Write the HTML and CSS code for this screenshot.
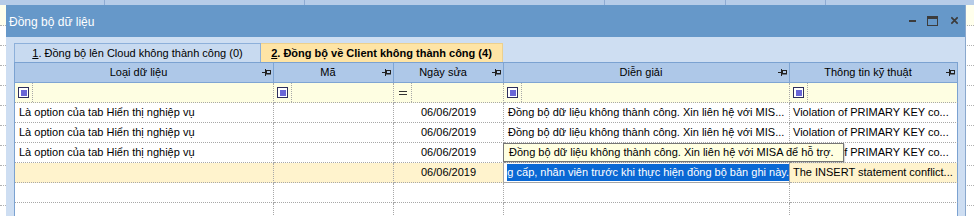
FILE: index.html
```html
<!DOCTYPE html>
<html lang="vi">
<head>
<meta charset="utf-8">
<title>Đồng bộ dữ liệu</title>
<link rel="stylesheet" href="styles.css">
</head>
<body>
<div class="desktop">
  <div class="bg">
    <div class="bg-head">
      <span class="bh w1"></span><span class="bh w2"></span><span class="bh w3"></span><span class="bh w4"></span><span class="bh w5"></span><span class="bh w6"></span>
    </div>
    <div class="bg-row first"></div>
    <div class="bg-row"></div>
    <div class="bg-row"></div>
    <div class="bg-row"></div>
    <div class="bg-row"></div>
    <div class="bg-row"></div>
    <div class="bg-row"></div>
    <div class="bg-row"></div>
    <div class="bg-row"></div>
    <div class="bg-row"></div>
    <div class="bg-row"></div>
  </div>

  <div class="window">
    <div class="titlebar">
      <span class="title">Đồng bộ dữ liệu</span>
      <div class="controls">
        <svg class="ic-min" width="7" height="11" viewBox="0 0 7 11"><rect x="0" y="4" width="7" height="2" fill="#3c3c3c"/></svg>
        <svg class="ic-max" width="11" height="11" viewBox="0 0 11 11"><rect x="0.5" y="0.5" width="10" height="9" fill="none" stroke="#3c3c3c"/><rect x="0" y="0" width="11" height="3" fill="#3c3c3c"/></svg>
        <svg class="ic-close" width="7" height="11" viewBox="0 0 7 11"><path d="M0.3 1.3 L6.7 7.7 M6.7 1.3 L0.3 7.7" stroke="#3c3c3c" stroke-width="1.9" fill="none"/></svg>
      </div>
    </div>

    <div class="panel">
      <div class="tabs">
        <div class="tab"><u>1</u>. Đồng bộ lên Cloud không thành công (0)</div>
        <div class="tab active"><u>2</u>. Đồng bộ về Client không thành công (4)</div>
      </div>

      <div class="grid">
        <div class="row hdr">
          <div class="cell"><span class="label">Loại dữ liệu</span><svg class="pin" width="10" height="7" viewBox="0 0 10 7"><path d="M0 3.5 H3.5 M3.5 0 V7" stroke="#222" fill="none"/><rect x="4.5" y="1.5" width="4" height="3" fill="none" stroke="#222"/><path d="M4 5 H9" stroke="#222"/></svg></div>
          <div class="cell"><span class="label">Mã</span><svg class="pin" width="10" height="7" viewBox="0 0 10 7"><path d="M0 3.5 H3.5 M3.5 0 V7" stroke="#222" fill="none"/><rect x="4.5" y="1.5" width="4" height="3" fill="none" stroke="#222"/><path d="M4 5 H9" stroke="#222"/></svg></div>
          <div class="cell"><span class="label">Ngày sửa</span><svg class="pin" width="10" height="7" viewBox="0 0 10 7"><path d="M0 3.5 H3.5 M3.5 0 V7" stroke="#222" fill="none"/><rect x="4.5" y="1.5" width="4" height="3" fill="none" stroke="#222"/><path d="M4 5 H9" stroke="#222"/></svg></div>
          <div class="cell"><span class="label">Diễn giải</span><svg class="pin" width="10" height="7" viewBox="0 0 10 7"><path d="M0 3.5 H3.5 M3.5 0 V7" stroke="#222" fill="none"/><rect x="4.5" y="1.5" width="4" height="3" fill="none" stroke="#222"/><path d="M4 5 H9" stroke="#222"/></svg></div>
          <div class="cell last"><span class="label">Thông tin kỹ thuật</span><svg class="pin" width="10" height="7" viewBox="0 0 10 7"><path d="M0 3.5 H3.5 M3.5 0 V7" stroke="#222" fill="none"/><rect x="4.5" y="1.5" width="4" height="3" fill="none" stroke="#222"/><path d="M4 5 H9" stroke="#222"/></svg></div>
        </div>

        <div class="row flt">
          <div class="cell"><span class="op"><span class="fbox"><span class="fdot"></span></span></span></div>
          <div class="cell"><span class="op"><span class="fbox"><span class="fdot"></span></span></span></div>
          <div class="cell"><span class="op"><span class="eq"></span></span></div>
          <div class="cell"><span class="op"><span class="fbox"><span class="fdot"></span></span></span></div>
          <div class="cell last"><span class="op"><span class="fbox"><span class="fdot"></span></span></span></div>
        </div>

        <div class="row data">
          <div class="cell">Là option của tab Hiển thị nghiệp vụ</div>
          <div class="cell"></div>
          <div class="cell date">06/06/2019</div>
          <div class="cell">Đồng bộ dữ liệu không thành công. Xin liên hệ với MIS...</div>
          <div class="cell last">Violation of PRIMARY KEY co...</div>
        </div>
        <div class="row data">
          <div class="cell">Là option của tab Hiển thị nghiệp vụ</div>
          <div class="cell"></div>
          <div class="cell date">06/06/2019</div>
          <div class="cell">Đồng bộ dữ liệu không thành công. Xin liên hệ với MIS...</div>
          <div class="cell last">Violation of PRIMARY KEY co...</div>
        </div>
        <div class="row data">
          <div class="cell">Là option của tab Hiển thị nghiệp vụ</div>
          <div class="cell"></div>
          <div class="cell date">06/06/2019</div>
          <div class="cell">Đồng bộ dữ liệu không thành công. Xin liên hệ với MIS...</div>
          <div class="cell last">Violation of PRIMARY KEY co...</div>
        </div>
        <div class="row data focused">
          <div class="cell"></div>
          <div class="cell"></div>
          <div class="cell date">06/06/2019</div>
          <div class="cell edit"><div class="sel"><span>Vui lòng nâng cấp, nhân viên trước khi thực hiện đồng bộ bản ghi này.</span></div></div>
          <div class="cell last">The INSERT statement conflict...</div>
        </div>
        <div class="row data">
          <div class="cell"></div><div class="cell"></div><div class="cell"></div><div class="cell"></div><div class="cell last"></div>
        </div>
        <div class="row data">
          <div class="cell"></div><div class="cell"></div><div class="cell"></div><div class="cell"></div><div class="cell last"></div>
        </div>

        <div class="tooltip">Đồng bộ dữ liệu không thành công. Xin liên hệ với MISA để hỗ trợ.</div>
      </div>
    </div>
  </div>
</div>
</body>
</html>
```
FILE: styles.css
```css
* { box-sizing: border-box; margin: 0; padding: 0; }
html, body { width: 974px; height: 216px; overflow: hidden; background: #ffffff; }
body { font-family: "Liberation Sans", Arial, sans-serif; font-size: 11px; color: #000; }

.desktop { position: relative; width: 974px; height: 216px; overflow: hidden; }

/* background grid behind the dialog */
.bg-head { height: 5px; display: flex; background: #b6cce8; }
.bh { height: 5px; border-right: 1px solid #8eabd2; }
.w1 { width: 105px; } .w2 { width: 200px; } .w3 { width: 300px; }
.w4 { width: 121px; } .w5 { width: 100px; } .w6 { flex: 1; border-right: none; }
.bg-row { height: 20px; border-bottom: 1px dotted #b0b0b0; }
.bg-row.first { height: 21px; background: #ffffec; }

/* dialog window */
.window {
  position: absolute; left: 6px; top: 5px;
  width: 960px; height: 212px;
  background: #cedef2;
  border-right: 1px solid #8aa8cd;
}
.titlebar {
  height: 32px; background: #6698c9; color: #fff;
  display: flex; align-items: flex-start; padding-left: 3px;
}
.title { font-size: 12px; line-height: 32px; padding-top: 1px; }
.controls { margin-left: auto; display: flex; align-items: flex-start; padding-top: 11px; padding-right: 7px; }
.ic-min { margin-right: 11px; }
.ic-max { margin-right: 13px; }

.panel { padding: 6px 7px 0 8px; }

.tabs { display: flex; height: 19px; }
.tab {
  height: 19px; line-height: 18px; text-align: center;
  border: 1px solid #8db0da; border-bottom: none;
  background: #c8daf0;
}
.tab:first-child { width: 247px; }
.tab.active { width: 242px; background: #fee4a5; border-color: #ecd08e; border-left: none; font-weight: bold; }

.grid {
  position: relative; width: 944px;
  border-left: 1px solid #7ba2d1; border-top: 1px solid #7ba2d1;
  background: #fff;
}
.row { display: grid; grid-template-columns: 259px 120px 110px 286px 168px; height: 20px; }
.cell { height: 20px; white-space: nowrap; overflow: hidden; }

.hdr .cell {
  background: #aec8e8; border-right: 1px solid #7fa5d3; border-bottom: 1px solid #7fa5d3;
  display: flex; align-items: center;
}
.hdr .label { flex: 1; text-align: center; line-height: 19px; }
.pin { margin-right: 1px; flex: none; }

.flt .cell {
  background: #fefee2; border-right: 1px dotted #a8a8a8; border-bottom: 1px dotted #a8a8a8;
  display: flex; align-items: center;
}
.op {
  width: 18px; height: 19px; border-right: 1px dotted #a8a8a8;
  display: flex; align-items: center; justify-content: center;
}
.fbox {
  width: 11px; height: 11px; border: 1px solid #2e2e5c; background: #fff;
  display: flex; align-items: center; justify-content: center;
}
.fdot { width: 6px; height: 6px; background: #6a66d6; }
.eq { width: 8px; height: 4px; border-top: 1px solid #333; border-bottom: 1px solid #333; margin-top: 1px; }

.data .cell {
  border-right: 1px dotted #a8a8a8; border-bottom: 1px dotted #a8a8a8;
  padding: 0 4px; line-height: 19px;
}
.data .cell.last { padding-left: 3px; }
.cell.last, .hdr .cell.last, .flt .cell.last { border-right: 1px solid #7ba2d1; }
.data .date { text-align: center; padding: 0; }

.focused .cell { background: #fff3cd; }
.focused .cell.edit {
  background: #fff; padding: 0;
  border-right: 1px solid #a6a6a6; border-bottom: 1px solid #a6a6a6;
  box-shadow: -1px 0 0 #a6a6a6;
}
.sel {
  margin: 1px 0 0 3px; height: 17px; overflow: hidden;
  display: flex; justify-content: flex-end;
  background: #0a68d4; color: #fff; line-height: 17px;
}
.sel span { white-space: nowrap; flex: none; }

.tooltip {
  position: absolute; left: 488px; top: 80px;
  width: 341px; height: 19px;
  border: 1px solid #767676; background: #ffffe1;
  padding-left: 5px; line-height: 17px; white-space: nowrap;
  box-shadow: 1px 1px 1px rgba(0,0,0,0.15);
}
```
